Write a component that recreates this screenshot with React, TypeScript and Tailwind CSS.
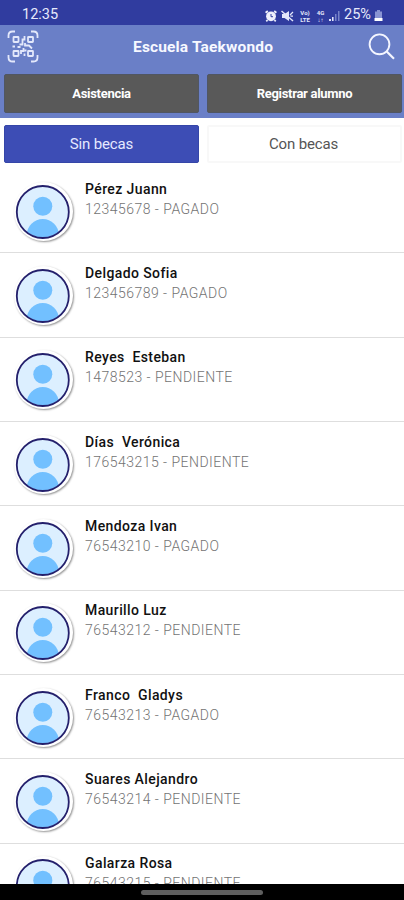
const students = [
  { name: 'Pérez Juann', detail: '12345678 - PAGADO' },
  { name: 'Delgado Sofia', detail: '123456789 - PAGADO' },
  { name: 'Reyes  Esteban', detail: '1478523 - PENDIENTE' },
  { name: 'Días  Verónica', detail: '176543215 - PENDIENTE' },
  { name: 'Mendoza Ivan', detail: '76543210 - PAGADO' },
  { name: 'Maurillo Luz', detail: '76543212 - PENDIENTE' },
  { name: 'Franco  Gladys', detail: '76543213 - PAGADO' },
  { name: 'Suares Alejandro', detail: '76543214 - PENDIENTE' },
  { name: 'Galarza Rosa', detail: '76543215 - PENDIENTE' },
];

function AlarmIcon() {
  return (
    <svg width="12" height="12" viewBox="0 0 12 12" fill="none" stroke="#eef0fc">
      <circle cx="6" cy="6.3" r="4.9" fill="#eef0fc" stroke="none" />
      <path d="M.6 2.8 2.8 1M11.4 2.8 9.2 1M2.5 10 1.3 11.300M9.500 10l1.200 1.300" strokeWidth="1.8" />
      <path d="M6 4v2.700h2" stroke="#303f9f" strokeWidth="1" />
    </svg>
  );
}

function MuteIcon() {
  return (
    <svg width="13" height="12" viewBox="0 0 13 12" fill="none" stroke="#e4e7fa">
      <path d="M1 4h2.500L8 1v10L3.500 8H1z" fill="#e4e7fa" stroke="none" />
      <path d="M.5 1l11.500 10" strokeWidth="1.5" />
      <path d="M9 5l3-3M9.500 6.200h2.500" strokeWidth="1.300" />
    </svg>
  );
}

function SignalIcon() {
  return (
    <svg width="12" height="12" viewBox="0 0 12 12">
      <path d="M0 9h2v2H0zM3 7h1.600v4H3z" fill="#dfe2f8" />
      <path d="M6 4h1.500v7H6zM9 1h1.500v10H9z" fill="#7783c9" />
    </svg>
  );
}

function BatteryIcon() {
  return (
    <svg width="9" height="12" viewBox="0 0 9 12">
      <path d="M3 0h3v1.500h2V8H1V1.500h2z" fill="#8994d3" />
      <path d="M.5 8h8v3h-8z" fill="#fff" />
    </svg>
  );
}

function QrIcon() {
  return (
    <svg width="32" height="33" viewBox="0 0 32 33" fill="none" stroke="#e3e8fb" strokeWidth="1.800">
      <path d="M1.500 8V5.500q0-4 4-4H8M24 1.500h2.500q4 0 4 4V8M30.500 25v2.500q0 4-4 4H24M8 31.500H5.500q-4 0-4-4V25" />
      <rect x="6.500" y="7" width="5" height="5" rx=".5" />
      <rect x="21" y="7" width="5" height="5" rx=".5" />
      <rect x="6.500" y="21" width="5" height="5" rx=".5" />
      <rect x="21" y="21" width="5" height="5" rx=".5" />
      <path d="M17.500 6v3.500h-2v5h-3M5.500 16.500h2.500M10.500 17h3M18 13v2.500h4l3 3M16.500 18v3h-2.500v3M17.500 23.500V26M17.500 20.500h2" />
    </svg>
  );
}

function SearchIcon() {
  return (
    <svg width="28" height="28" viewBox="0 0 28 28" fill="none" stroke="#f4f6ff" strokeWidth="1.900">
      <circle cx="11.500" cy="11.300" r="9.900" />
      <path d="m18.700 18.500 7.300 7.200" strokeWidth="2.200" />
    </svg>
  );
}

function Avatar() {
  return (
    <div className="mt-[12.5px] ml-[14px] size-[59px] shrink-0 rounded-full bg-white shadow-[1px_1px_2px_0px_rgba(0,0,0,0.42)]">
      <svg width="59" height="59" viewBox="0 0 59 59">
        <defs>
          <clipPath id="face">
            <circle cx="28.800" cy="30" r="25.500" />
          </clipPath>
        </defs>
        <circle cx="28.800" cy="30" r="26" fill="#dcefff" />
        <g clipPath="url(#face)" fill="#72c0ff">
          <circle cx="28.800" cy="24.200" r="9.500" />
          <circle cx="28.800" cy="53" r="16" />
        </g>
        <circle cx="28.800" cy="30" r="26" fill="none" stroke="#24206c" strokeWidth="1.800" />
      </svg>
    </div>
  );
}

export default function App() {
  return (
    <div className="flex h-[900px] w-[404px] flex-col overflow-hidden bg-white font-[Roboto,sans-serif]">
      <div className="flex h-[25px] shrink-0 items-center bg-[#303c9f] pt-[6px] pl-[22px] text-[#e6e9fb]">
        <span className="w-[243px] text-[14.5px] leading-none">12:35</span>
        <AlarmIcon />
        <span className="ml-[4px]"><MuteIcon /></span>
        <span className="ml-[4px] flex w-[14px] flex-col items-center text-[6px] leading-[7px] font-bold"><span>Vo)</span><span>LTE</span></span>
        <span className="ml-[3px] flex w-[11px] flex-col items-center text-[6px] leading-[7px] font-bold"><span>4G</span><span>↓↑</span></span>
        <span className="ml-[3px]"><SignalIcon /></span>
        <span className="ml-[3px] w-[30px] text-[14.5px] leading-none">25%</span>
        <BatteryIcon />
      </div>
      <header className="h-[93px] shrink-0 bg-[#6a7fc7]">
        <div className="flex h-[49px] items-start pl-[7px]">
          <div className="w-[126px] pt-[5px]"><QrIcon /></div>
          <h1 className="w-[235px] pt-[11px] text-[15.5px] leading-[22px] font-bold tracking-[0.16px] whitespace-nowrap text-[#f7f8ff]">Escuela Taekwondo</h1>
          <div className="w-[36px] pt-[8px]"><SearchIcon /></div>
        </div>
        <div className="flex gap-[8px] pl-[4px] text-[13px] font-bold tracking-[-0.3px] text-white">
          <button className="h-[39px] w-[195px] rounded-[2px] border border-[#505663] bg-[#595959]">Asistencia</button>
          <button className="h-[39px] w-[195px] rounded-[2px] border border-[#505663] bg-[#595959]">Registrar alumno</button>
        </div>
      </header>
      <nav className="flex h-[51px] shrink-0 gap-[8px] pt-[7px] pl-[4px] text-[15px] tracking-[-0.15px]">
        <button className="h-[38px] w-[195px] rounded-[2px] border border-[#3546a8] bg-[#3d4db5] text-[#e5e9ff]">Sin becas</button>
        <button className="h-[38px] w-[195px] rounded-[2px] border-2 border-[#f8f8f8] bg-white pr-[2px] text-[#555]">Con becas</button>
      </nav>
      <main className="h-[715px] shrink-0 overflow-hidden">
        {students.map((student) => (
          <div key={student.name} className="flex h-[84.35px] border-b-[1.5px] border-[#dedede]">
            <Avatar />
            <div className="ml-[12px] pt-[9.5px] whitespace-pre">
              <p className="text-[14px] leading-[20px] font-medium tracking-[0.4px] text-[#111]">{student.name}</p>
              <p className="text-[14px] leading-[20px] font-light tracking-[0.48px] text-[#737373]">{student.detail}</p>
            </div>
          </div>
        ))}
      </main>
      <footer className="flex h-[16px] shrink-0 items-center justify-center bg-black">
        <div className="h-[5px] w-[122px] rounded-full bg-[#5e5e5e]" />
      </footer>
    </div>
  );
}
